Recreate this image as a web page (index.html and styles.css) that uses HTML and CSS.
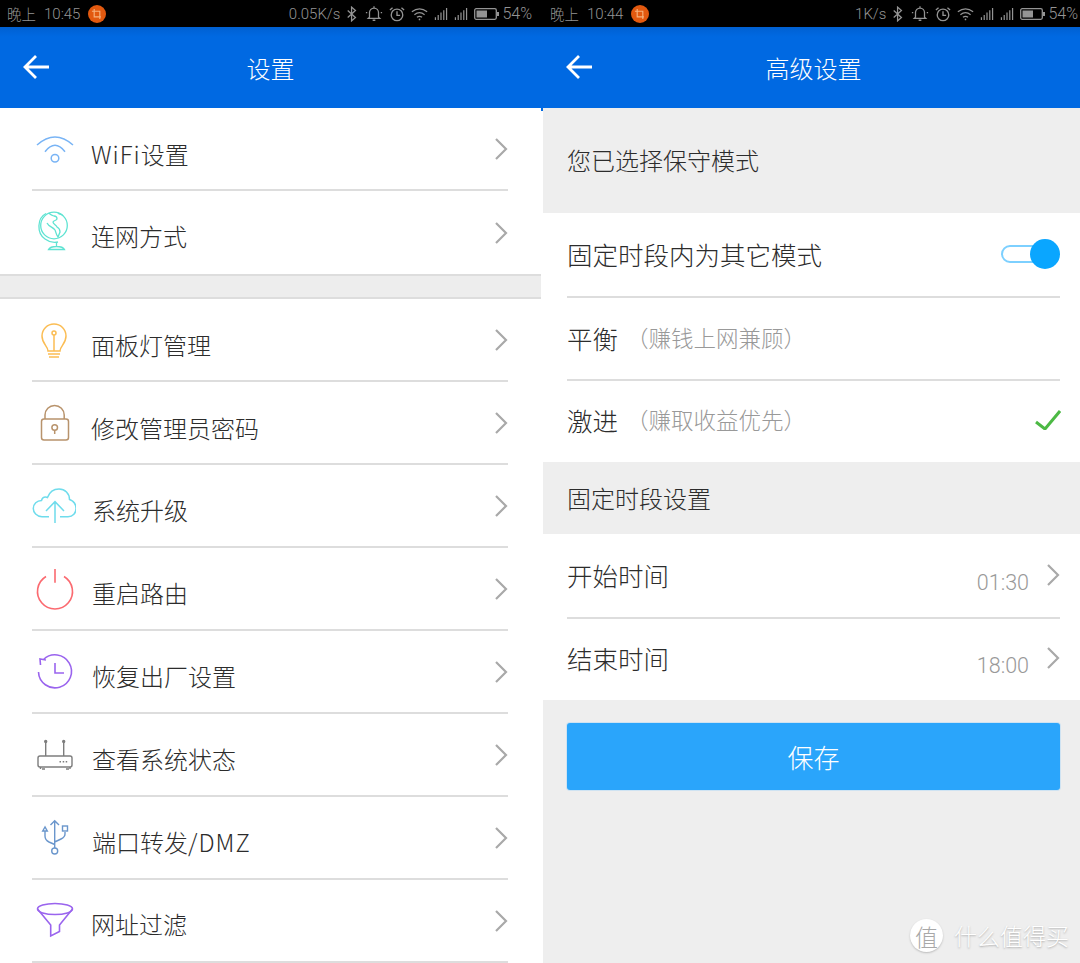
FILE: index.html
```html
<!DOCTYPE html>
<html lang="zh-CN">
<head>
	<meta charset="utf-8">
	<meta name="viewport" content="width=device-width, initial-scale=1.0">
	<link rel="stylesheet" href="styles.css">
</head>
<body>
	<svg class="defs" width="0" height="0">
		<symbol id="s-bt" viewBox="0 0 14 18"><path d="M2 5l9 8-4.500 4V1l4.500 4-9 8" fill="none" stroke="currentColor" stroke-width="1.500"/></symbol>
		<symbol id="s-bell" viewBox="0 0 20 18"><path d="M5 13V8a5 5 0 0 1 10 0v5l1.500 1.500h-13zM8.500 16.500h3M10 1v2M1 8h1.500M17.500 8H19" fill="none" stroke="currentColor" stroke-width="1.400"/></symbol>
		<symbol id="s-alarm" viewBox="0 0 18 18"><circle cx="9" cy="10" r="6.500" fill="none" stroke="currentColor" stroke-width="1.500"/><path d="M9 6v4.500h3.500M1 4.500L4 2M17 4.500L14 2" fill="none" stroke="currentColor" stroke-width="1.500"/></symbol>
		<symbol id="s-wifi" viewBox="0 0 20 16"><path d="M1 6q9-7 18 0M4 9.500q6-5 12 0M7 12.500q3-2.500 6 0" fill="none" stroke="currentColor" stroke-width="1.400"/><circle cx="10" cy="15" r="1" fill="currentColor"/></symbol>
		<symbol id="s-signal" viewBox="0 0 14 14"><path d="M1 14v-3M4 14V8.500M7 14V6M10 14V3.500M13 14V1" fill="none" stroke="currentColor" stroke-width="1.300"/></symbol>
		<symbol id="s-batt" viewBox="0 0 25 12"><rect x=".7" y=".7" width="21.600" height="10.600" rx="1.500" fill="none" stroke="currentColor" stroke-width="1.300"/><rect x="2.500" y="2.500" width="10.500" height="7" fill="currentColor"/><rect x="23" y="4" width="2" height="4" fill="currentColor"/></symbol>
		<symbol id="s-crop" viewBox="0 0 16 16"><circle cx="8" cy="8" r="8" fill="#e2590f"/><path d="M5.500 3.500v7h6M3.500 5.500h7v7" fill="none" stroke="#f6b27e" stroke-width="1"/></symbol>
		<symbol id="s-back" viewBox="0 0 26 26"><path d="M13 2L2 13l11 11M2 13h24" fill="none" stroke="#fff" stroke-width="2.800"/></symbol>
		<symbol id="s-chev" viewBox="0 0 14 22"><path d="M2 1l10 10L2 21" fill="none" stroke="#a9a9a9" stroke-width="2.200"/></symbol>
	</svg>

	<div class="screen">
		<div class="pane left">
			<div class="status">
				<span class="clock">晚上</span><span class="time">10:45</span><svg class="crop"><use href="#s-crop"/></svg>
				<div class="status-right">
					<span class="speed">0.05K/s</span>
					<svg class="si bt"><use href="#s-bt"/></svg>
					<svg class="si bell"><use href="#s-bell"/></svg>
					<svg class="si alarm"><use href="#s-alarm"/></svg>
					<svg class="si wifi"><use href="#s-wifi"/></svg>
					<svg class="si signal"><use href="#s-signal"/></svg>
					<svg class="si signal"><use href="#s-signal"/></svg>
					<svg class="si batt"><use href="#s-batt"/></svg>
					<span class="pct">54%</span>
				</div>
			</div>
			<div class="header">
				<svg class="back"><use href="#s-back"/></svg>
				<div class="title">设置</div>
			</div>

			<div class="row">
				<svg class="icon" viewBox="0 0 44 44" fill="none" stroke="#79b4f5" stroke-width="1.500"><path d="M5 18Q23 2 41 18M13 24.700Q23 12 33 24.700"/><circle cx="23" cy="31.300" r="3.800"/></svg>
				<span class="label"><span class="latin">WiFi</span>设置</span>
				<svg class="chev"><use href="#s-chev"/></svg>
			</div>
			<div class="row last">
				<svg class="icon" viewBox="0 0 44 44" fill="none" stroke="#5fe3d2" stroke-width="1.300"><circle cx="22" cy="14.500" r="13.300"/><path d="M14 2.500C5 7 4.500 22 13 28c4 3 9 4 13 3"/><path d="M17 2c1 2 3 2 5 3 2 0 3 1 3 3-1 2-3 1-4 3 0 2 3 3 4 5 2 1 3 3 3 5l-2 5c-2-2-2-5-3-7-2-3-6-3-8-7M26 2c2 2 4 1 5 3"/><path d="M24.500 31v5M16.500 38.500c1-2 4-3 8-3s7 1 8 3z"/></svg>
				<span class="label high">连网方式</span>
				<svg class="chev"><use href="#s-chev"/></svg>
			</div>

			<div class="gap"></div>

			<div class="row">
				<svg class="icon" viewBox="0 0 44 44" fill="none" stroke="#fbbd54" stroke-width="1.500"><path d="M16 33c0-5-6-7-6-15a12 12 0 0 1 24 0c0 8-6 10-6 15z"/><circle cx="22" cy="15" r="2"/><path d="M22 17v16M16 36h12M17 39h10"/></svg>
				<span class="label">面板灯管理</span>
				<svg class="chev"><use href="#s-chev"/></svg>
			</div>
			<div class="row">
				<svg class="icon" viewBox="0 0 44 44" fill="none" stroke="#b8936c" stroke-width="1.500"><rect x="9.500" y="18" width="27" height="21" rx="2.500"/><path d="M13 18v-4a9.600 9.600 0 0 1 19.200 0v4"/><circle cx="22.700" cy="26.500" r="2.800"/><path d="M22.700 29v4"/></svg>
				<span class="label">修改管理员密码</span>
				<svg class="chev"><use href="#s-chev"/></svg>
			</div>
			<div class="row">
				<svg class="icon" viewBox="0 0 44 44" fill="none" stroke="#6fdcec" stroke-width="1.500"><path d="M17 32.700H10C4.500 32.700 1.300 28.500 1.300 24.500 1.300 20 5 16.500 9.500 16.500 10 14.500 11.500 13 13.500 13 14 13 15 13.200 15.500 13.500 17.500 8 22 5 27 5 33 5 37.500 9.500 37.500 15.500 41.500 17 44 20.500 44 24.500 44 29 41 32.700 36 32.700H28"/><path d="M23 17.700V39M14 27l9-9.300 9 9.300"/></svg>
				<span class="label up">系统升级</span>
				<svg class="chev"><use href="#s-chev"/></svg>
			</div>
			<div class="row">
				<svg class="icon" viewBox="0 0 44 44" fill="none" stroke="#fb6a70" stroke-width="1.600"><path d="M14 9.500a17.500 17.500 0 1 0 18 0M23 2v13.700"/></svg>
				<span class="label up">重启路由</span>
				<svg class="chev"><use href="#s-chev"/></svg>
			</div>
			<div class="row">
				<svg class="icon" viewBox="0 0 44 44" fill="none" stroke="#9a64ee" stroke-width="1.600"><path d="M11.500 9.500A16.500 16.500 0 1 1 6.500 22M8.500 15l-.500-6 6 1"/><path d="M23 13v10h9"/></svg>
				<span class="label up">恢复出厂设置</span>
				<svg class="chev"><use href="#s-chev"/></svg>
			</div>
			<div class="row">
				<svg class="icon" viewBox="0 0 44 44" fill="none" stroke="#7d7d7d" stroke-width="1.400"><rect x="6" y="23" width="34" height="11" rx="2"/><path d="M13.700 9v14M31.700 9v14M8.500 34v2M38 34v2M10 36h3M34 36h3"/><circle cx="13.700" cy="8.500" r="1" fill="#7d7d7d"/><circle cx="31.700" cy="8.500" r="1" fill="#7d7d7d"/><path d="M27.500 28.700h1.500M30.700 28.700h1.500M33.700 28.700h1.500" stroke-width="1.500"/></svg>
				<span class="label up">查看系统状态</span>
				<svg class="chev"><use href="#s-chev"/></svg>
			</div>
			<div class="row">
				<svg class="icon" viewBox="0 0 44 44" fill="none" stroke="#6a96cc" stroke-width="1.400"><path d="M22.700 5v27M18.500 9l4.200-4.300L27 9M13 15v5c0 4 2 5 4 6l5.700 2.500M33 16v2c0 3-2 4-4 5l-6.300 3"/><circle cx="22.700" cy="35" r="3"/><path d="M13 11l-2.300 4h4.600z"/><rect x="30.500" y="10" width="5" height="5"/></svg>
				<span class="label up">端口转发<span class="latin">/DMZ</span></span>
				<svg class="chev"><use href="#s-chev"/></svg>
			</div>
			<div class="row">
				<svg class="icon" viewBox="0 0 44 44" fill="none" stroke="#9a64ee" stroke-width="1.600"><ellipse cx="23" cy="10" rx="17.500" ry="5.500"/><path d="M5.500 10l13.200 16v11l8.800-4.500V26L40.500 10"/></svg>
				<span class="label high">网址过滤</span>
				<svg class="chev"><use href="#s-chev"/></svg>
			</div>
		</div>

		<div class="pane right">
			<div class="status">
				<span class="clock">晚上</span><span class="time">10:44</span><svg class="crop"><use href="#s-crop"/></svg>
				<div class="status-right">
					<span class="speed">1K/s</span>
					<svg class="si bt"><use href="#s-bt"/></svg>
					<svg class="si bell"><use href="#s-bell"/></svg>
					<svg class="si alarm"><use href="#s-alarm"/></svg>
					<svg class="si wifi"><use href="#s-wifi"/></svg>
					<svg class="si signal"><use href="#s-signal"/></svg>
					<svg class="si signal"><use href="#s-signal"/></svg>
					<svg class="si batt"><use href="#s-batt"/></svg>
					<span class="pct">54%</span>
				</div>
			</div>
			<div class="header">
				<svg class="back"><use href="#s-back"/></svg>
				<div class="title">高级设置</div>
			</div>

			<div class="form">
				<div class="notice">您已选择保守模式</div>

				<div class="opt bordered tall">
					<span class="opt-name">固定时段内为其它模式</span>
					<div class="toggle"><span class="knob"></span></div>
				</div>
				<div class="opt bordered">
					<span class="opt-name">平衡</span><span class="hint">（赚钱上网兼顾）</span>
				</div>
				<div class="opt short">
					<span class="opt-name">激进</span><span class="hint">（赚取收益优先）</span>
					<svg class="check" viewBox="0 0 26 20" fill="none" stroke="#4cb944" stroke-width="3"><path d="M1 12l9 7L25 1"/></svg>
				</div>

				<div class="section">固定时段设置</div>

				<div class="opt bordered tall">
					<span class="opt-name">开始时间</span>
					<span class="value">01:30</span>
					<svg class="chev"><use href="#s-chev"/></svg>
				</div>
				<div class="opt short">
					<span class="opt-name">结束时间</span>
					<span class="value">18:00</span>
					<svg class="chev"><use href="#s-chev"/></svg>
				</div>

				<div class="save">保存</div>
			</div>

			<div class="mark">
				<span class="mark-badge">值</span>
				<span class="mark-text">什么值得买</span>
			</div>
		</div>
	</div>
</body>
</html>
```

FILE: styles.css
```css
* {
	box-sizing: border-box;
}
body {
	margin: 0;
	background: #fff;
	font-family: "Noto Sans CJK SC", "Noto Sans", sans-serif;
	font-weight: 300;
	color: #2c2c2c;
}
.defs {
	position: absolute;
}
.screen {
	display: grid;
	grid-template-columns: 541px 539px;
	width: 1080px;
	height: 963px;
	overflow: hidden;
}
.pane {
	position: relative;
	display: flex;
	flex-direction: column;
	background: #fff;
}

/* status bar */
.status {
	display: flex;
	align-items: center;
	height: 27px;
	background: #000;
	color: #949494;
	font-size: 14.500px;
	padding: 0 9px 0 7px;
	flex: none;
}
.right .status {
	padding: 0 2px 0 9px;
}
.clock {
	margin-right: 8px;
}
.time {
	font-family: Roboto, sans-serif;
	font-size: 15px;
}
.crop {
	width: 18px;
	height: 18px;
	margin-left: 8px;
}
.status-right {
	display: flex;
	align-items: center;
	margin-left: auto;
}
.speed, .pct {
	font-family: Roboto, sans-serif;
	font-size: 15px;
}
.si {
	flex: none;
}
.bt {
	width: 12px;
	height: 16px;
	margin-left: 6px;
}
.bell {
	width: 18px;
	height: 17px;
	margin-left: 7px;
}
.alarm {
	width: 16px;
	height: 16px;
	margin-left: 6px;
}
.wifi {
	width: 17px;
	height: 15px;
	margin-left: 6px;
}
.signal {
	width: 14px;
	height: 13px;
	margin-left: 6px;
}
.batt {
	width: 25px;
	height: 12px;
	margin-left: 6px;
}
.pct {
	font-size: 16px;
	margin-left: 3px;
}

/* title bar */
.header {
	display: flex;
	align-items: center;
	justify-content: center;
	position: relative;
	height: 81px;
	flex: none;
	background: linear-gradient(#0060d2, #0069e2 12%);
}
.right .header {
	padding-left: 6px;
}
.right .header::after {
	content: "";
	position: absolute;
	left: 0;
	top: 81px;
	width: 2px;
	height: 3px;
	background: #0069e2;
}
.title {
	color: #fff;
	font-size: 24px;
	line-height: 30px;
}
.back {
	position: absolute;
	left: 23px;
	top: 27px;
	width: 26px;
	height: 26px;
}
.right .back {
	left: 25px;
}

/* left list */
.row {
	display: flex;
	align-items: center;
	flex: none;
	height: 83px;
	margin: 0 33px 0 32px;
	border-bottom: 2px solid #ddd;
}
.row.last {
	border-bottom: 0;
}
.icon {
	width: 44px;
	height: 44px;
	flex: none;
}
.label {
	font-size: 24px;
	line-height: 30px;
	margin: 10px 0 0 15px;
}
.label.up {
	margin-top: 9px;
	margin-left: 16px;
}
.label.high {
	margin-top: 6px;
}
.latin {
	letter-spacing: 1px;
}
.chev {
	width: 14px;
	height: 22px;
	flex: none;
	margin-left: auto;
}
.gap {
	height: 25px;
	flex: none;
	background: #ededed;
	border-top: 2px solid #ddd;
	border-bottom: 2px solid #ddd;
}

/* right form */
.form {
	flex: 1;
	display: flex;
	flex-direction: column;
	margin-left: 2px;
	background: #eee;
}
.notice {
	display: flex;
	align-items: center;
	height: 105px;
	flex: none;
	padding: 0 0 2px 24px;
	font-size: 24px;
}
.opt {
	display: flex;
	align-items: center;
	flex: none;
	height: 83px;
	padding: 0 20px 3px 24px;
	background: #fff;
	position: relative;
}
.opt.bordered::after {
	content: "";
	position: absolute;
	left: 24px;
	right: 20px;
	bottom: 0;
	height: 2px;
	background: #ddd;
}
.opt.short {
	height: 81px;
}
.opt.tall {
	height: 85px;
}
.opt-name {
	font-size: 25.500px;
	line-height: 30px;
	margin-top: -1px;
}
.hint {
	font-size: 22.500px;
	color: #999;
	margin-left: 8px;
	margin-top: -2px;
}
.toggle {
	position: relative;
	width: 44px;
	height: 18px;
	margin-left: auto;
	margin-right: 15px;
	border: 2.500px solid #7dd0ff;
	border-radius: 9px;
}
.knob {
	position: absolute;
	right: -16.500px;
	top: -8.500px;
	width: 30px;
	height: 30px;
	border-radius: 50%;
	background: #0aa6ff;
}
.check {
	width: 26px;
	height: 20px;
	margin-left: auto;
	margin-right: -1px;
}
.section {
	display: flex;
	align-items: center;
	height: 72px;
	flex: none;
	padding: 0 0 2px 24px;
	font-size: 24px;
}
.value {
	font-family: Roboto, sans-serif;
	font-size: 21.500px;
	color: #999;
	margin: 15px 17px 0 auto;
}
.opt .chev {
	margin-left: 0;
}
.save {
	flex: none;
	display: flex;
	align-items: center;
	justify-content: center;
	height: 67px;
	margin: 23px 20px 0 24px;
	background: #2aa5fb;
	box-shadow: 0 0 0 1px #cfe3f2;
	border-radius: 3px;
	color: #fff;
	font-size: 26px;
}

/* site watermark over the page */
.mark {
	position: absolute;
	left: 369px;
	top: 919px;
	display: flex;
	align-items: center;
	gap: 11px;
	color: #fff;
	text-shadow: 0 1px 2px #aaa;
}
.mark-badge {
	display: flex;
	align-items: center;
	justify-content: center;
	width: 33px;
	height: 33px;
	border-radius: 50%;
	background: #fff;
	color: #a8a8a8;
	font-size: 23px;
	text-shadow: none;
	box-shadow: 0 1px 2px #bbb;
}
.mark-text {
	font-size: 23px;
	line-height: 33px;
}
```
